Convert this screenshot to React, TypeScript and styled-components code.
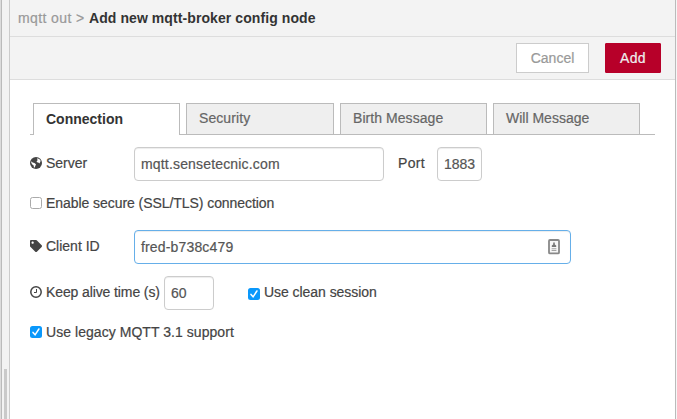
import React from "react";
import styled, { createGlobalStyle } from "styled-components";
import { FaTag } from "react-icons/fa";

const GlobalStyle = createGlobalStyle`
  * { box-sizing: border-box; }
  body {
    margin: 0;
    overflow: hidden;
    background: #fff;
    color: #444;
    font: 14px/20px "Helvetica Neue", "Liberation Sans", Arial, sans-serif;
  }
`;

const Screen = styled.div`
  display: flex;
  width: 677px;
  height: 419px;
  background: #f6f6f6;
`;

const Gutter = styled.div`
  flex: 0 0 9px;
  display: flex;
  align-items: flex-end;
  padding-left: 2px;
  background: #f3f3f3;
  border-left: 1px solid #dcdcdc;
  box-shadow: inset 1px 0 0 #bbb;
`;

const Thumb = styled.div`
  width: 3px;
  height: 50px;
  margin-left: 1px;
  background: #cacaca;
`;

const Tray = styled.main`
  flex: 0 0 667px;
  display: flex;
  flex-direction: column;
  background: #fff;
  border-left: 1px solid #ccc;
  border-right: 1px solid #bbb;
`;

const Header = styled.header`
  display: flex;
  height: 37px;
  padding: 8px 0 0 8px;
  background: #f3f3f3;
  border-bottom: 1px solid #ddd;
  color: #999;
`;

const Toolbar = styled.div`
  display: flex;
  justify-content: flex-end;
  gap: 16px;
  height: 43px;
  padding: 6px 14px 0 0;
  background: #f3f3f3;
  border-bottom: 1px solid #ddd;
`;

const Button = styled.button<{ $primary?: boolean }>`
  width: ${(p) => (p.$primary ? 56 : 73)}px;
  height: 30px;
  padding: 0;
  border: 1px solid ${(p) => (p.$primary ? "#b70029" : "#ccc")};
  border-radius: ${(p) => (p.$primary ? 1 : 0)}px;
  background: ${(p) => (p.$primary ? "#b70029" : "#fff")};
  color: ${(p) => (p.$primary ? "#eee" : "#999")};
  font: 14px/20px "Helvetica Neue", "Liberation Sans", Arial, sans-serif;
  -webkit-text-stroke: ${(p) => (p.$primary ? 0.4 : 0)}px;
`;

const Text = styled.span<{ $track?: number; $strong?: boolean }>`
  letter-spacing: ${(p) => p.$track ?? 0}px;
  font-weight: ${(p) => (p.$strong ? 700 : 400)};
  white-space: pre;
  -webkit-text-stroke: ${(p) => (p.$strong ? 0 : 0.2)}px;
  ${(p) => p.$strong && "color: #333;"}
`;

const Tabs = styled.nav`
  display: flex;
  gap: 6px;
  width: 625px;
  height: 32px;
  margin: 23px 0 12px 20px;
  padding-left: 3px;
  border-bottom: 1px solid #bbb;
`;

const Tab = styled.div<{ $active?: boolean; $width: number }>`
  width: ${(p) => p.$width}px;
  height: ${(p) => (p.$active ? 32 : 31)}px;
  padding: ${(p) => (p.$active ? 5 : 4)}px 0 0 12px;
  border: 1px solid #bbb;
  border-bottom: 0;
  background: ${(p) => (p.$active ? "#fff" : "#efefef")};
  color: #666;
`;

const Row = styled.div<{ $height: number; $gap: number }>`
  display: flex;
  align-items: flex-start;
  height: ${(p) => p.$height}px;
  margin: 0 0 ${(p) => p.$gap}px 20px;
`;

const Label = styled.label<{ $width?: number; $top?: number; $indent?: number }>`
  display: flex;
  align-items: center;
  gap: 4px;
  height: 20px;
  margin-top: ${(p) => p.$top ?? 6}px;
  padding-left: ${(p) => p.$indent ?? 0}px;
  width: ${(p) => (p.$width ? `${p.$width}px` : "auto")};
`;

const IconSlot = styled.span`
  display: flex;
  flex: 0 0 12px;
  justify-content: center;
`;

const Field = styled.div<{ $width: number; $focus?: boolean }>`
  display: flex;
  align-items: center;
  justify-content: space-between;
  width: ${(p) => p.$width}px;
  height: 34px;
  padding: 0 10px 0 6px;
  border: 1px solid ${(p) => (p.$focus ? "#66afe9" : "#ccc")};
  border-radius: 4px;
  box-shadow: inset 0 1px 1px rgba(0, 0, 0, 0.075);
  color: #555;
`;

const Box = styled.span<{ $checked?: boolean; $drop?: number }>`
  display: flex;
  flex: 0 0 12px;
  height: 12px;
  margin-top: ${(p) => p.$drop ?? 0}px;
  border: ${(p) => (p.$checked ? "0" : "1px solid #aaa")};
  border-radius: 2.5px;
  background: ${(p) => (p.$checked ? "#0a98fb" : "#fff")};
`;

const Check = ({ checked, drop }: { checked?: boolean; drop?: number }) => (
  <Box $checked={checked} $drop={drop}>
    {checked && (
      <svg width="12" height="12" viewBox="0 0 12 12" fill="none" stroke="#fff" strokeWidth="1.5">
        <path d="M3 6.4 5.1 8.8 8.9 3" strokeLinecap="round" />
      </svg>
    )}
  </Box>
);

const GlobeIcon = () => (
  <svg width="12" height="12" viewBox="0 0 12 12" fill="#fff">
    <circle cx="6" cy="6" r="6" fill="#444" />
    <path d="M1.5 4.3 2.6 5.6 4.4 6 6 7.3 5.5 8.5 4.7 10.6 3.9 10.4 3.7 8.6 2.3 7.4 1.2 5.7z" />
    <path d="M7 1.2 9.2 2 10.7 3.8 10.1 5.2 9.4 6.6 8.3 5.4 7 5.2 6.6 4.2 7.6 3.2z" />
  </svg>
);

const ClockIcon = () => (
  <svg width="12" height="12" viewBox="0 0 12 12" fill="none" stroke="#444">
    <circle cx="6" cy="6" r="5.2" strokeWidth="1.5" />
    <path d="M6.5 3v3.5H4" strokeWidth="1" />
  </svg>
);

const ContactIcon = () => (
  <svg width="12" height="16" viewBox="0 0 12 16" fill="#777">
    <rect x="1" y="1" width="10" height="13.4" rx="1" fill="#f7f7f7" stroke="#888" strokeWidth="1.8" />
    <path d="M5.2 3.5h1.6v2l1.4 1V8H3.8V6.5l1.4-1z" />
    <path d="M3.6 9.3h4.8v1H3.6zM3.6 11h4.8v1H3.6z" opacity=".65" />
  </svg>
);

const tabs = [
  { name: "Connection", width: 147, track: 0 },
  { name: "Security", width: 148, track: 0.08 },
  { name: "Birth Message", width: 147, track: 0.06 },
  { name: "Will Message", width: 147, track: 0 },
];

export default function App() {
  return (
    <>
      <GlobalStyle />
      <Screen>
        <Gutter><Thumb /></Gutter>
        <Tray>
          <Header>
            <Text $track={0.4}>{"mqtt out > "}</Text>
            <Text $strong $track={0.085}>Add new mqtt-broker config node</Text>
          </Header>
          <Toolbar>
            <Button><Text>Cancel</Text></Button>
            <Button $primary><Text $track={0.3}>Add</Text></Button>
          </Toolbar>
          <Tabs>
            {tabs.map((t, i) => (
              <Tab key={t.name} $active={i === 0} $width={t.width}>
                <Text $strong={i === 0} $track={t.track}>{t.name}</Text>
              </Tab>
            ))}
          </Tabs>
          <Row $height={34} $gap={12}>
            <Label $width={104}>
              <IconSlot><GlobeIcon /></IconSlot>
              <Text>Server</Text>
            </Label>
            <Field $width={250}><Text $track={0.17}>mqtt.sensetecnic.com</Text></Field>
            <Label $width={53} $indent={14}><Text $track={0.3}>Port</Text></Label>
            <Field $width={45}><Text>1883</Text></Field>
          </Row>
          <Row $height={20} $gap={17}>
            <Label $top={0}>
              <Check />
              <Text $track={-0.06}>Enable secure (SSL/TLS) connection</Text>
            </Label>
          </Row>
          <Row $height={34} $gap={12}>
            <Label $width={104}>
              <IconSlot><FaTag size={12} /></IconSlot>
              <Text>Client ID</Text>
            </Label>
            <Field $width={437} $focus>
              <Text $track={0.16}>fred-b738c479</Text>
              <ContactIcon />
            </Field>
          </Row>
          <Row $height={34} $gap={12}>
            <Label $width={134}>
              <IconSlot><ClockIcon /></IconSlot>
              <Text $track={-0.11}>Keep alive time (s)</Text>
            </Label>
            <Field $width={50}><Text>60</Text></Field>
            <Label $indent={34}>
              <Check checked drop={3} />
              <Text $track={-0.05}>Use clean session</Text>
            </Label>
          </Row>
          <Row $height={20} $gap={0}>
            <Label $top={0}>
              <Check checked />
              <Text $track={0.05}>Use legacy MQTT 3.1 support</Text>
            </Label>
          </Row>
        </Tray>
      </Screen>
    </>
  );
}
